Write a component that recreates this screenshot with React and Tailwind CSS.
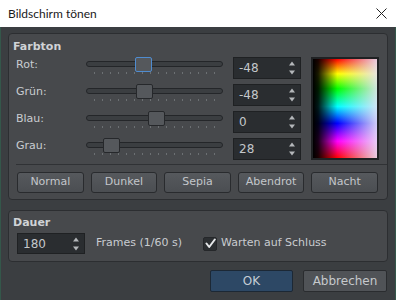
const sliders = [
  { label: 'Rot:', value: -48, pos: 49, focus: true },
  { label: 'Grün:', value: -48, pos: 50 },
  { label: 'Blau:', value: 0, pos: 62 },
  { label: 'Grau:', value: 28, pos: 17 },
];

const presets = ['Normal', 'Dunkel', 'Sepia', 'Abendrot', 'Nacht'];

function SpinArrows() {
  return (
    <svg width="6" height="14" viewBox="0 0 6 14" className="shrink-0">
      <polygon points="3,0.5 6,4.5 0,4.5" fill="#b4b7ba" />
      <polygon points="0,9.5 6,9.5 3,13.5" fill="#b4b7ba" />
    </svg>
  );
}

function SpinBox({ value, className }) {
  return (
    <div className={`flex items-center justify-between pl-[5px] pr-[5px] bg-[#2a2d30] border border-[#1f2123] text-[12px] text-[#c4c7ca] ${className}`}>
      <span>{value}</span>
      <SpinArrows />
    </div>
  );
}

function Slider({ pos, focus }) {
  return (
    <div className="relative w-[137px] h-[22px]">
      <div className="absolute left-0 right-0 top-[4px] h-[6px] rounded-full border border-[#242629] bg-[#3b3e41]" />
      <div className="absolute top-[15px] left-[8px] flex gap-[7px]">
        {Array.from({ length: 16 }).map((_, i) => (
          <div key={i} className="w-px h-[2px] bg-[#6c7073]" />
        ))}
      </div>
      <div
        className={`absolute top-0 w-[17px] h-[15px] rounded-[2px] border ${focus ? 'border-[#4f8cd0] bg-[#55585c]' : 'border-[#26282b] bg-[#55585c]'}`}
        style={{ left: pos }}
      />
    </div>
  );
}

function ColorField() {
  return (
    <div className="w-[68px] h-[103px] border-2 border-[#1f2123] bg-black">
      <svg width="64" height="99" viewBox="0 0 64 99" preserveAspectRatio="none" className="block">
        <defs>
          <linearGradient id="hue" x1="0" y1="0" x2="0" y2="1">
            <stop offset="0" stopColor="#ff0000" />
            <stop offset="0.15" stopColor="#ffff00" />
            <stop offset="0.3" stopColor="#00ff00" />
            <stop offset="0.48" stopColor="#00ffff" />
            <stop offset="0.65" stopColor="#0000ff" />
            <stop offset="0.83" stopColor="#ff00ff" />
            <stop offset="1" stopColor="#ff0000" />
          </linearGradient>
          <linearGradient id="dark" x1="0" y1="0" x2="1" y2="0">
            <stop offset="0" stopColor="#000" stopOpacity="1" />
            <stop offset="0.08" stopColor="#000" stopOpacity="0.9" />
            <stop offset="0.38" stopColor="#000" stopOpacity="0" />
          </linearGradient>
          <linearGradient id="light" x1="0" y1="0" x2="1" y2="0">
            <stop offset="0.38" stopColor="#e6e2f6" stopOpacity="0" />
            <stop offset="1" stopColor="#e6e2f6" stopOpacity="0.9" />
          </linearGradient>
        </defs>
        <rect width="64" height="99" fill="url(#hue)" />
        <rect width="64" height="99" fill="url(#light)" />
        <rect width="64" height="99" fill="url(#dark)" />
      </svg>
    </div>
  );
}

export default function App() {
  return (
    <div className="w-[396px] h-[300px] flex flex-col overflow-hidden" style={{ fontFamily: '"DejaVu Sans", sans-serif' }}>
      {/* title bar */}
      <div className="h-[27px] shrink-0 bg-white flex items-center justify-between pl-[8px] pr-[8px]">
        <span className="text-[12px] text-[#1a1a1a]" style={{ fontFamily: 'Lato, sans-serif' }}>Bildschirm tönen</span>
        <svg width="11" height="11" viewBox="0 0 11 11" className="mr-[1px]">
          <path d="M0.5 0.5 L10.5 10.5 M10.5 0.5 L0.5 10.5" stroke="#222" strokeWidth="1" />
        </svg>
      </div>

      <div className="flex-1 bg-[#3b3e41] border-x border-[#34574a] pt-[6px] pl-[7px] pr-[7px] text-[11px] text-[#c9ccd0]">
        {/* Farbton */}
        <div className="rounded-[4px] border border-[#2c2e31] bg-[#47494c] pt-[6px] pb-[6px] pl-[4px]">
          <div className="font-bold leading-[13px] text-[#d0d3d6]">Farbton</div>
          <div className="mt-[4px] ml-[3px] flex">
            <div className="flex flex-col gap-[5px]">
              {sliders.map((s) => (
                <div key={s.label} className="flex h-[22px] items-start">
                  <div className="w-[70px] leading-[14px] pt-[1px]">{s.label}</div>
                  <Slider pos={s.pos} focus={s.focus} />
                  <SpinBox value={s.value} className="ml-[10px] w-[68px] h-[22px]" />
                </div>
              ))}
            </div>
            <div className="ml-[10px]">
              <ColorField />
            </div>
          </div>
          <div className="mt-[4px] ml-[3px] h-px bg-[#303235]" />
          <div className="mt-[7px] ml-[4px] mr-[9px] grid grid-cols-5 gap-[7px]">
            {presets.map((p) => (
              <div key={p} className="h-[21px] flex items-center justify-center rounded-[3px] border border-[#292b2e] bg-gradient-to-b from-[#56595d] to-[#4b4e52] text-[#c3c6ca]">
                {p}
              </div>
            ))}
          </div>
        </div>

        {/* Dauer */}
        <div className="mt-[10px] rounded-[4px] border border-[#2c2e31] bg-[#47494c] pt-[5px] pb-[7px] pl-[4px]">
          <div className="font-bold leading-[13px] text-[#d0d3d6]">Dauer</div>
          <div className="mt-[4px] ml-[4px] flex items-center">
            <SpinBox value="180" className="w-[68px] h-[21px]" />
            <span className="ml-[11px]">Frames (1/60 s)</span>
            <div className="ml-[21px] w-[14px] h-[14px] rounded-[2px] border border-[#25272a] bg-[#2c2f32] flex items-center justify-center">
              <svg width="11" height="11" viewBox="0 0 11 11">
                <path d="M1.5 5.5 L4.2 9 L9.8 1.5" fill="none" stroke="#e6e8ea" strokeWidth="2" strokeLinecap="round" strokeLinejoin="round" />
              </svg>
            </div>
            <span className="ml-[4px]">Warten auf Schluss</span>
          </div>
        </div>

        {/* dialog buttons */}
        <div className="mt-[8px] flex justify-end gap-[10px] pr-[1px]">
          <div className="w-[83px] h-[22px] flex items-center justify-center rounded-[2px] border border-[#1c2835] bg-[#2d4865] text-[12px] text-[#c6cdd5]">
            OK
          </div>
          <div className="w-[84px] h-[22px] flex items-center justify-center rounded-[2px] border border-[#2a2c2f] bg-[#505357] text-[12px] text-[#c6c9cc]">
            Abbrechen
          </div>
        </div>
      </div>
    </div>
  );
}
